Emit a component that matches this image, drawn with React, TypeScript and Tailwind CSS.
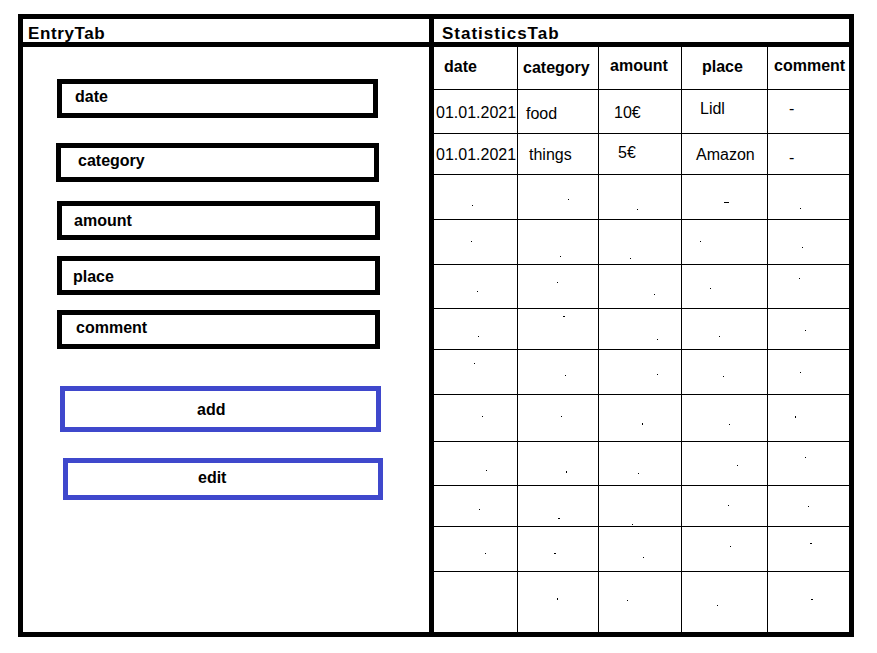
import React from "react";

type Dot = [number, number, number?, number?];

const headers = [
  { t: "date", c: "pl-[10px] pt-[12px]" },
  { t: "category", c: "pl-[5px] pt-[13px]" },
  { t: "amount", c: "pl-[11px] pt-[11px]" },
  { t: "place", c: "pl-[20px] pt-[12px]" },
  { t: "comment", c: "pl-[6px] pt-[11px]" },
];

const row1 = [
  { t: "01.01.2021", c: "pl-[2px] pt-[15px]" },
  { t: "food", c: "pl-[8px] pt-[16px]" },
  { t: "10€", c: "pl-[15px] pt-[15px]" },
  { t: "Lidl", c: "pl-[18px] pt-[11px]" },
  { t: "-", c: "pl-[21px] pt-[11px]" },
];

const row2 = [
  { t: "01.01.2021", c: "pl-[2px] pt-[13px]" },
  { t: "things", c: "pl-[11px] pt-[13px]" },
  { t: "5€", c: "pl-[19px] pt-[11px]" },
  { t: "Amazon", c: "pl-[14px] pt-[13px]" },
  { t: "-", c: "pl-[21px] pt-[16px]" },
];

const emptyRows: (Dot | null)[][] = [
  [[38, 30], [50, 24], [38, 34], [42, 27, 5, 1], [32, 33]],
  [[37, 21], [42, 36], [31, 38], [18, 21], [34, 27]],
  [[43, 26], [39, 17], [55, 29], [28, 23], [31, 13]],
  [[44, 27], [45, 7, 2, 1], [58, 30], [37, 27], [37, 21]],
  [[40, 13], [47, 25], [58, 24], [41, 26], [32, 22]],
  [[48, 21], [43, 21], [43, 28, 1, 2], [47, 29], [27, 21, 1, 2]],
  [[52, 28], [48, 29, 1, 2], [39, 31], [55, 23], [37, 15]],
  [[45, 23], [40, 32, 2, 1], [33, 38], [46, 19], [40, 20]],
  [[51, 26], [36, 26, 2, 1], [44, 30], [48, 19], [42, 16, 2, 1]],
  [null, [39, 26, 1, 2], [28, 28], [35, 33], [43, 27, 2, 1]],
];

const inputs = [
  { t: "date", box: "ml-[34px] mt-[32px] w-[321px]", txt: "pl-[13px] pt-[5px]" },
  { t: "category", box: "ml-[33px] mt-[25px] w-[323px]", txt: "pl-[17px] pt-[5px]" },
  { t: "amount", box: "ml-[34px] mt-[19px] w-[323px]", txt: "pl-[12px] pt-[7px]" },
  { t: "place", box: "ml-[34px] mt-[16px] w-[323px]", txt: "pl-[11px] pt-[8px]" },
  { t: "comment", box: "ml-[34px] mt-[15px] w-[323px]", txt: "pl-[14px] pt-[5px]" },
];

export default function App() {
  return (
    <div
      className="w-[877px] h-[653px] bg-white pl-[18px] pt-[14px] text-black"
      style={{ fontFamily: '"Liberation Sans", Arial, sans-serif' }}
    >
      <div className="flex w-[836px] h-[623px] border-[5px] border-black">
        {/* Entry tab */}
        <div className="w-[411px] h-full border-r-[5px] border-black flex flex-col">
          <div className="h-[28px] border-b-[5px] border-black pl-[5px] pt-[6px] text-[17px] leading-[17px] font-bold tracking-[0.6px]">
            EntryTab
          </div>
          <div className="flex flex-col">
            {inputs.map((i) => (
              <div key={i.t} className={`${i.box} h-[39px] border-[5px] border-black`}>
                <div className={`${i.txt} text-[16px] leading-[16px] font-bold`}>{i.t}</div>
              </div>
            ))}
            <div className="ml-[37px] mt-[37px] w-[321px] h-[46px] border-[5px] border-[#3F48CC]">
              <div className="pl-[132px] pt-[11px] text-[16px] leading-[16px] font-bold">add</div>
            </div>
            <div className="ml-[40px] mt-[26px] w-[320px] h-[42px] border-[5px] border-[#3F48CC]">
              <div className="pl-[130px] pt-[7px] text-[16px] leading-[16px] font-bold">edit</div>
            </div>
          </div>
        </div>

        {/* Statistics tab */}
        <div className="w-[415px] h-full flex flex-col">
          <div className="h-[28px] border-b-[5px] border-black pl-[8px] pt-[6px] text-[17px] leading-[17px] font-bold tracking-[1px]">
            StatisticsTab
          </div>
          <div className="grid grid-cols-[83px_80px_82px_85px_81px] grid-rows-[42px_43px_40px_44px_44px_43px_40px_44px_46px_43px_40px_44px_60px] gap-px bg-black w-[415px] h-[585px]">
            {headers.map((h) => (
              <div key={h.t} className={`bg-white ${h.c} text-[16px] leading-[16px] font-bold`}>
                {h.t}
              </div>
            ))}
            {row1.map((h, i) => (
              <div key={"a" + i} className={`bg-white ${h.c} text-[16px] leading-[16px]`}>
                {h.t}
              </div>
            ))}
            {row2.map((h, i) => (
              <div key={"b" + i} className={`bg-white ${h.c} text-[16px] leading-[16px]`}>
                {h.t}
              </div>
            ))}
            {emptyRows.map((r, ri) =>
              r.map((d, ci) => (
                <div key={`e${ri}-${ci}`} className="bg-white overflow-hidden">
                  {d && (
                    <span
                      className="block bg-black"
                      style={{
                        marginLeft: d[0],
                        marginTop: d[1],
                        width: d[2] ?? 1,
                        height: d[3] ?? 1,
                      }}
                    />
                  )}
                </div>
              ))
            )}
          </div>
        </div>
      </div>
    </div>
  );
}
